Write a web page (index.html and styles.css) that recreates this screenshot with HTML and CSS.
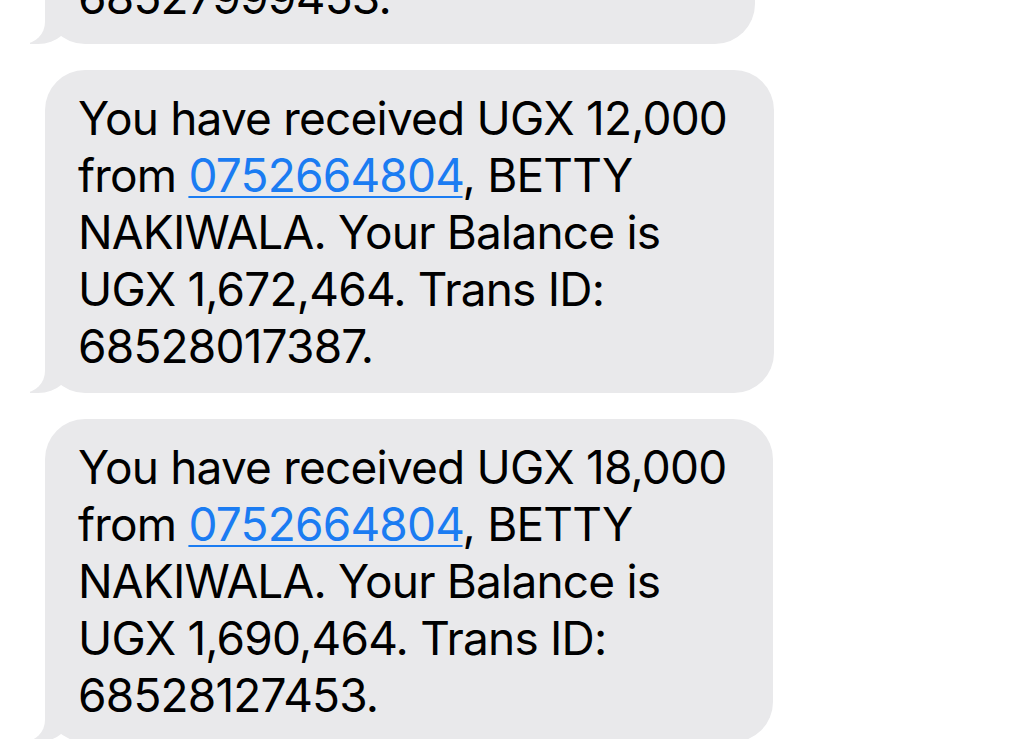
FILE: index.html
```html
<!DOCTYPE html>
<html lang="en">
<head>
  <meta charset="UTF-8" />
  <meta name="viewport" content="width=device-width, initial-scale=1.0"/>
  <title>Messages</title>
  <link rel="stylesheet" href="styles.css">
</head>
<body>
  <div class="thread">
    <div class="bubble first">
      You have received UGX 6,000<br>
      from <a href="#">0752664804</a>, BETTY<br>
      NAKIWALA. Your Balance is<br>
      UGX 1,660,464. Trans ID:<br>
      68527999453.
    </div>

    <div class="bubble">
      You have received UGX 12,000<br>
      from <a href="#">0752664804</a>, BETTY<br>
      NAKIWALA. Your Balance is<br>
      UGX 1,672,464. Trans ID:<br>
      68528017387.
    </div>

    <div class="bubble">
      You have received UGX 18,000<br>
      from <a href="#">0752664804</a>, BETTY<br>
      NAKIWALA. Your Balance is<br>
      UGX 1,690,464. Trans ID:<br>
      68528127453.
    </div>
  </div>
</body>
</html>
```

FILE: styles.css
```css
body {
  margin: 0;
  background: #fff;
  font-family: Inter, "Noto Sans", sans-serif;
  color: #000;
  overflow: hidden;
}

.thread {
  display: flex;
  flex-direction: column;
  align-items: flex-start;
  gap: 26px;
  padding-left: 45px;
}

.bubble {
  position: relative;
  background: #e9e9eb;
  border-radius: 40px;
  padding: 20px 47px 18px 33px;
  font-size: 46px;
  line-height: 57px;
  letter-spacing: -0.8px;
}

.bubble.first {
  margin-top: -279px;
}

/* tail */
.bubble::before {
  content: "";
  position: absolute;
  bottom: 0;
  left: -15px;
  width: 42px;
  height: 50px;
  background: #e9e9eb;
  border-bottom-right-radius: 34px 30px;
}

.bubble::after {
  content: "";
  position: absolute;
  bottom: 0;
  left: -54px;
  width: 54px;
  height: 50px;
  background: #fff;
  border-bottom-right-radius: 22px;
}

.bubble a {
  color: #1b7cf2;
  text-decoration: underline;
  text-decoration-thickness: 2px;
  text-underline-offset: 4px;
}
```
